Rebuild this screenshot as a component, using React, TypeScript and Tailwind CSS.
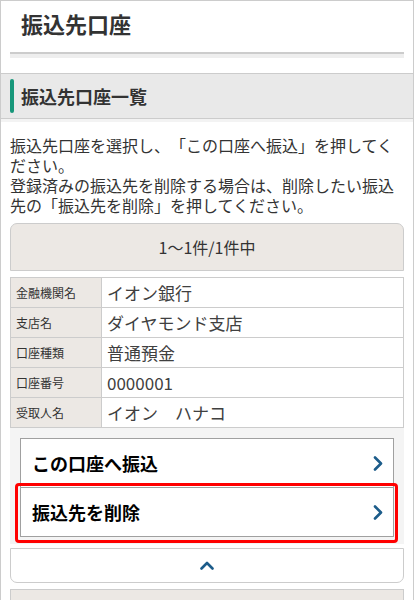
import React from "react";

const font = { fontFamily: '"Noto Sans CJK JP", "Noto Sans", sans-serif' };

function ChevronRight() {
  return (
    <svg width="10" height="15" viewBox="0 0 10 15" className="shrink-0">
      <path d="M2 1.5 L8 7.5 L2 13.5" fill="none" stroke="#1c5c8a" strokeWidth="2.6" strokeLinecap="round" strokeLinejoin="round" />
    </svg>
  );
}

function ChevronUp() {
  return (
    <svg width="14" height="9" viewBox="0 0 14 9">
      <path d="M1.5 7.5 L7 2 L12.5 7.5" fill="none" stroke="#1c5c8a" strokeWidth="2.6" strokeLinecap="round" strokeLinejoin="round" />
    </svg>
  );
}

const rows: [string, string][] = [
  ["金融機関名", "イオン銀行"],
  ["支店名", "ダイヤモンド支店"],
  ["口座種類", "普通預金"],
  ["口座番号", "0000001"],
  ["受取人名", "イオン　ハナコ"],
];

export default function App() {
  return (
    <div style={font} className="w-[414px] min-h-[600px] border-x border-t border-[#cccccc] bg-white text-[#333333] [text-spacing-trim:space-all]">
      {/* Title */}
      <div className="px-[20px] pt-[11px]">
        <h1 className="text-[22px] leading-[22px] font-bold">振込先口座</h1>
      </div>
      <div className="mx-[9px] mt-[18px] h-[6px] border-t-2 border-[#cccccc] bg-[#eeeeee]" />
      {/* Section header */}
      <div className="mt-[15px] border-y border-[#cccccc] bg-[#e9e9e9] h-[46px] flex items-center pl-[9px]">
        <div className="w-[4px] h-[34px] rounded-full bg-[#17977a]" />
        <h2 className="ml-[7px] text-[18px] leading-[18px] font-bold">振込先口座一覧</h2>
      </div>
      <div className="h-[3px] bg-[#f3f3f3]" />
      <div className="mx-[9px]">
        <p className="mt-[13px] text-[16px] leading-[20px]">
          振込先口座を選択し、「この口座へ振込」を押してください。
          <br />
          登録済みの振込先を削除する場合は、削除したい振込先の「振込先を削除」を押してください。
        </p>
        {/* Pagination */}
        <div className="mt-[8px] h-[48px] rounded-t-[7px] border border-[#cccccc] bg-[#ece8e4] flex items-center justify-center text-[16px]">
          1〜1件/1件中
        </div>
        {/* Table */}
        <div className="mt-[6px] border-t border-l border-[#cccccc]">
          {rows.map(([k, v]) => (
            <div key={k} className="flex h-[30px] border-b border-[#cccccc]">
              <div className="w-[91px] shrink-0 border-r border-[#cccccc] bg-[#ece8e4] pl-[5px] flex items-center text-[12px]">
                {k}
              </div>
              <div className="flex-1 border-r border-[#cccccc] pl-[5px] flex items-center text-[17px] text-[#404040] whitespace-pre">
                {v}
              </div>
            </div>
          ))}
        </div>
        {/* Buttons */}
        <div className="bg-[#f4f4f4] px-[10px] pt-[10px] pb-[7px]">
          <div className="h-[49px] border-x border-t border-[#a0a0a0] bg-white flex items-center justify-between pl-[11px] pr-[10px]">
            <span className="text-[18px] font-bold text-black">この口座へ振込</span>
            <ChevronRight />
          </div>
          <div className="relative h-[50px] border border-[#a0a0a0] bg-white flex items-center justify-between pl-[11px] pr-[10px]">
            <span className="text-[18px] font-bold text-black">振込先を削除</span>
            <ChevronRight />
            <div className="pointer-events-none absolute -top-[5px] -bottom-[7px] -left-[6px] -right-[5px] rounded-[4px] border-[3px] border-[#ff0000]" />
          </div>
        </div>
        <div className="mt-[4px] h-[35px] rounded-b-[7px] border border-[#cccccc] bg-white flex items-center justify-center">
          <ChevronUp />
        </div>
        <div className="mt-[6px] h-[20px] border border-[#cccccc] bg-[#ece8e4]" />
      </div>
    </div>
  );
}
